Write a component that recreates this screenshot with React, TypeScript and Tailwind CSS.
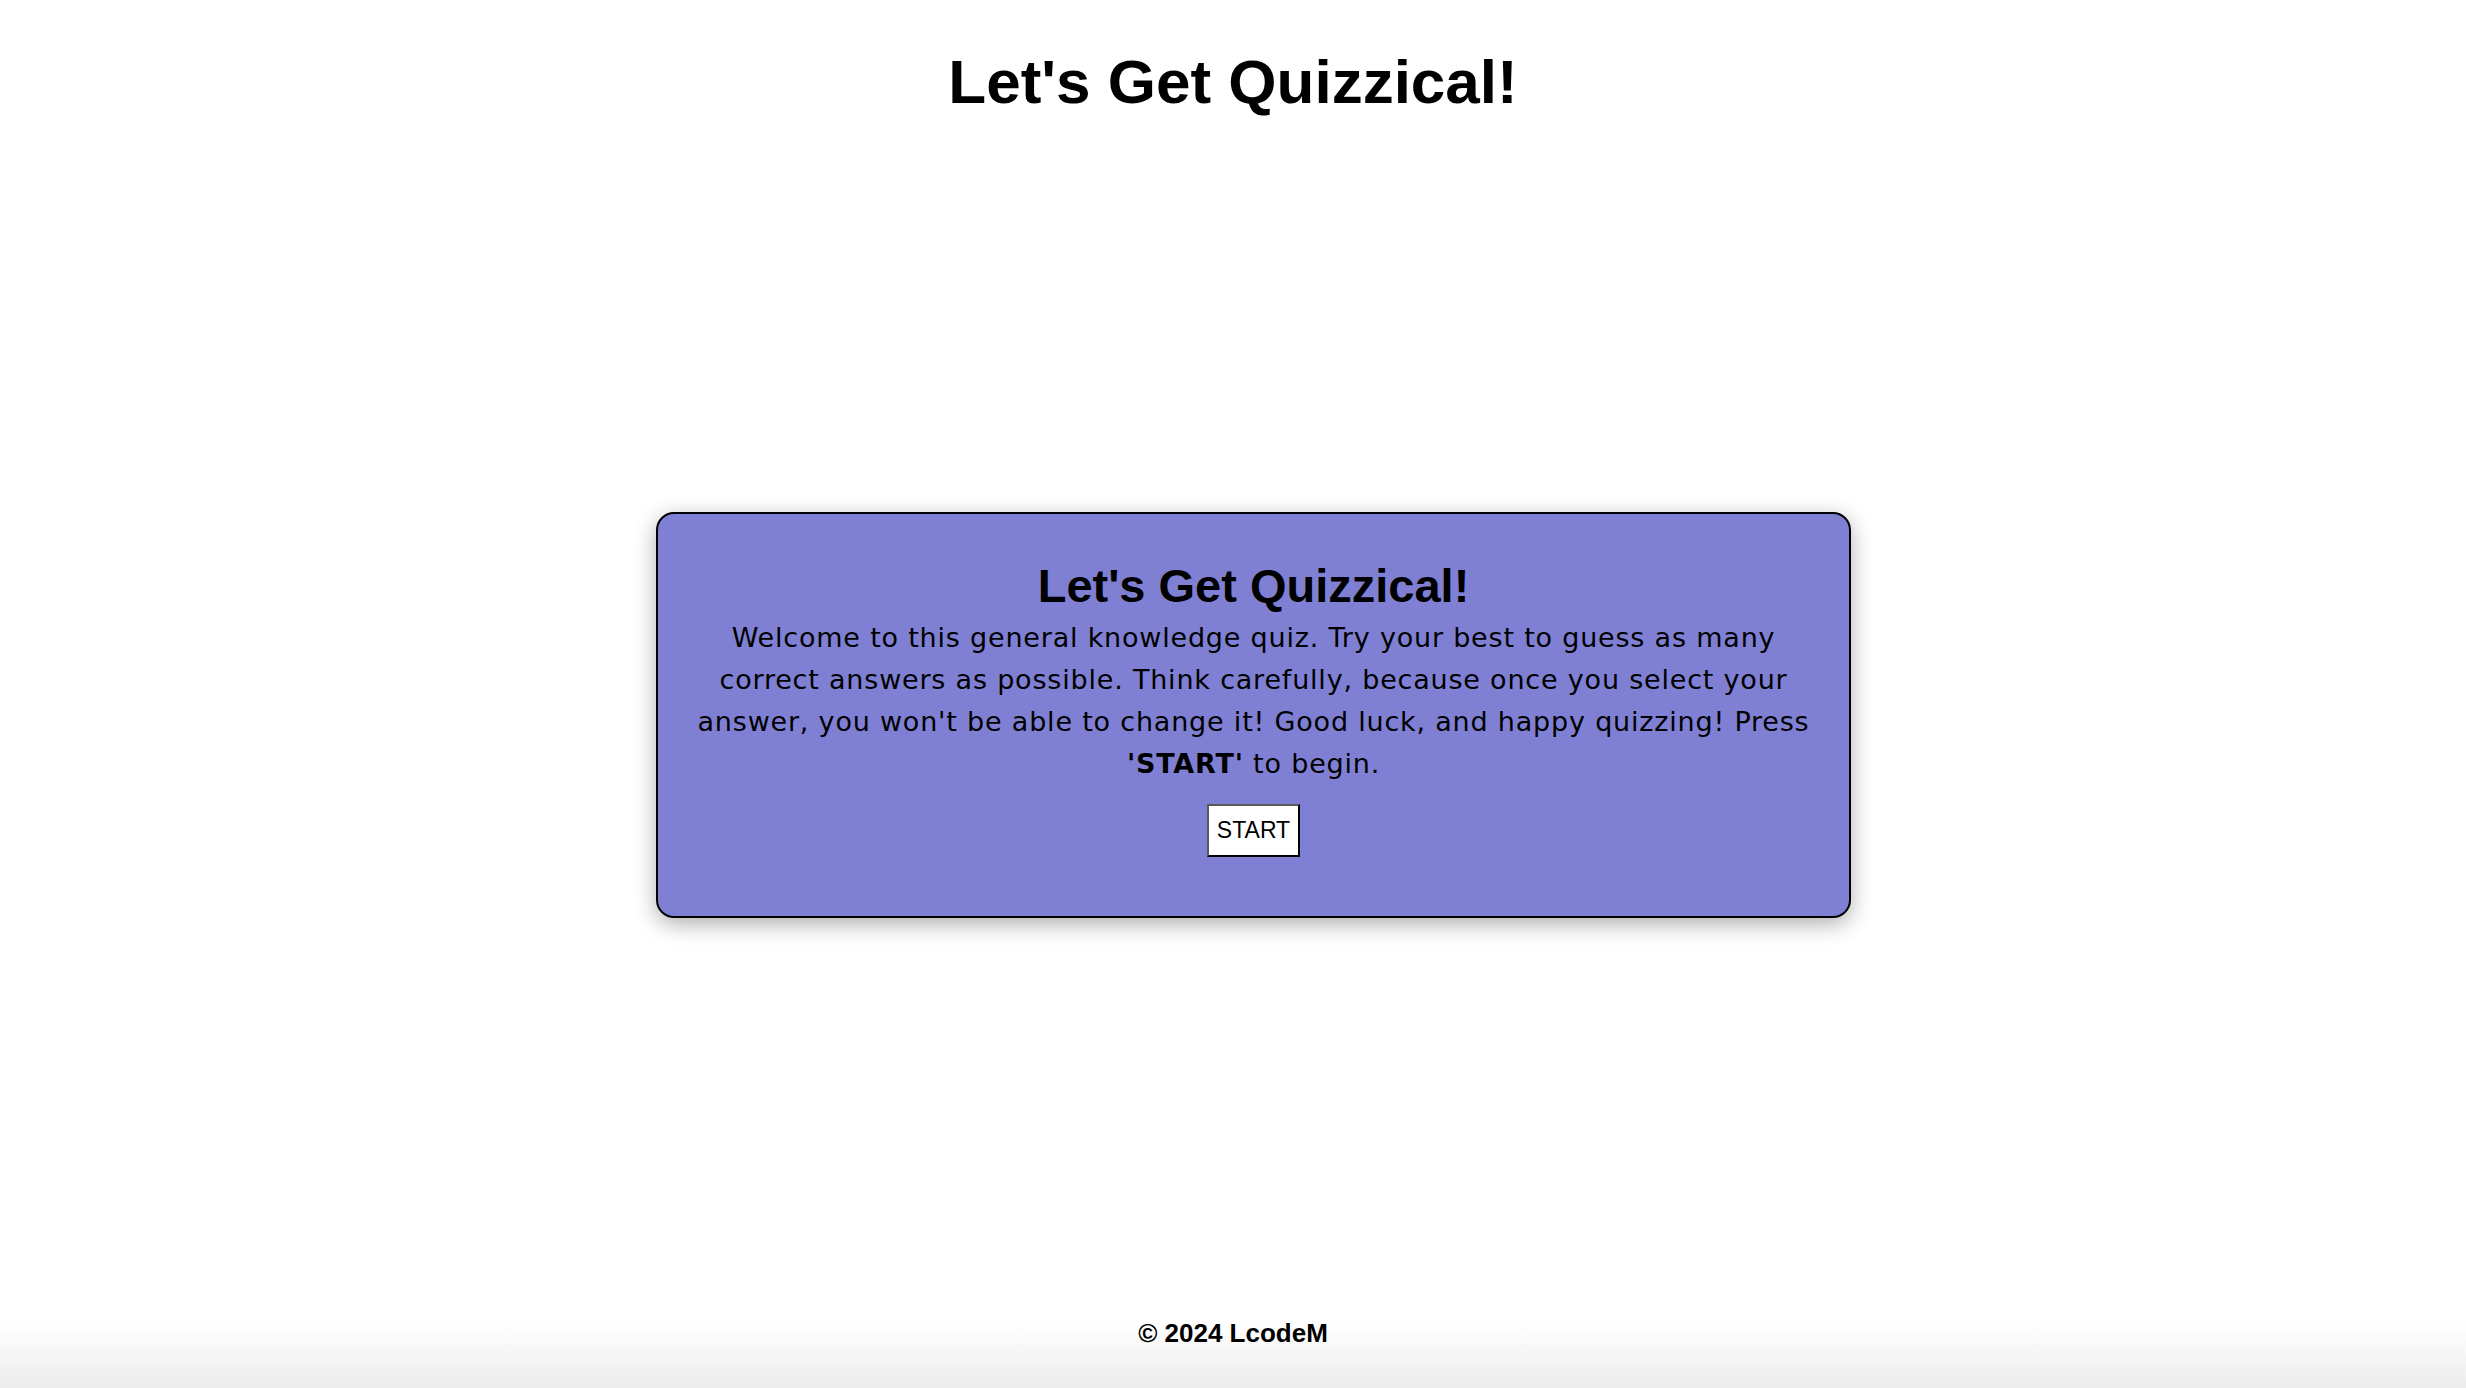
const titleFont = "font-['Liberation_Sans',Arial,sans-serif]";

function StartCard() {
  return (
    <div className="ml-[41px] w-[1195px] rounded-[18px] border-2 border-black bg-[#7f80d4] px-[24px] pt-[45px] pb-[59px] text-center text-black shadow-[0_6px_22px_rgba(0,0,0,0.32)]">
      <h2 className={`${titleFont} text-[47px] leading-[54px] font-bold`}>
        Let's Get Quizzical!
      </h2>
      <p className="mt-[4px] font-['DejaVu_Sans',Verdana,sans-serif] text-[27px] leading-[42px] tracking-[0.8px]">
        Welcome to this general knowledge quiz. Try your best to guess as many
        <br />
        correct answers as possible. Think carefully, because once you select
        your
        <br />
        answer, you won't be able to change it! Good luck, and happy quizzing!
        Press
        <br />
        <strong>'START'</strong> to begin.
      </p>
      <button className="mt-[19px] border-2 border-t-[#5a5a5a] border-l-[#5a5a5a] border-r-black border-b-black bg-white px-[8px] py-[11px] font-['Liberation_Sans',Arial,sans-serif] text-[23px] leading-[27px] text-black">
        START
      </button>
    </div>
  );
}

export default function App() {
  return (
    <div className="flex min-h-screen flex-col bg-white text-black">
      <header className="pt-[46px] text-center">
        <h1 className={`${titleFont} text-[62px] leading-[72px] font-bold`}>
          Let's Get Quizzical!
        </h1>
      </header>

      <main className="flex flex-1 items-center justify-center pt-[23px]">
        <StartCard />
      </main>

      <footer className="h-[100px] bg-linear-to-b from-white from-[35%] to-[#ececec] pt-[30px] text-center">
        <p className={`${titleFont} text-[26px] leading-[30px] font-bold`}>
          © 2024 LcodeM
        </p>
      </footer>
    </div>
  );
}
